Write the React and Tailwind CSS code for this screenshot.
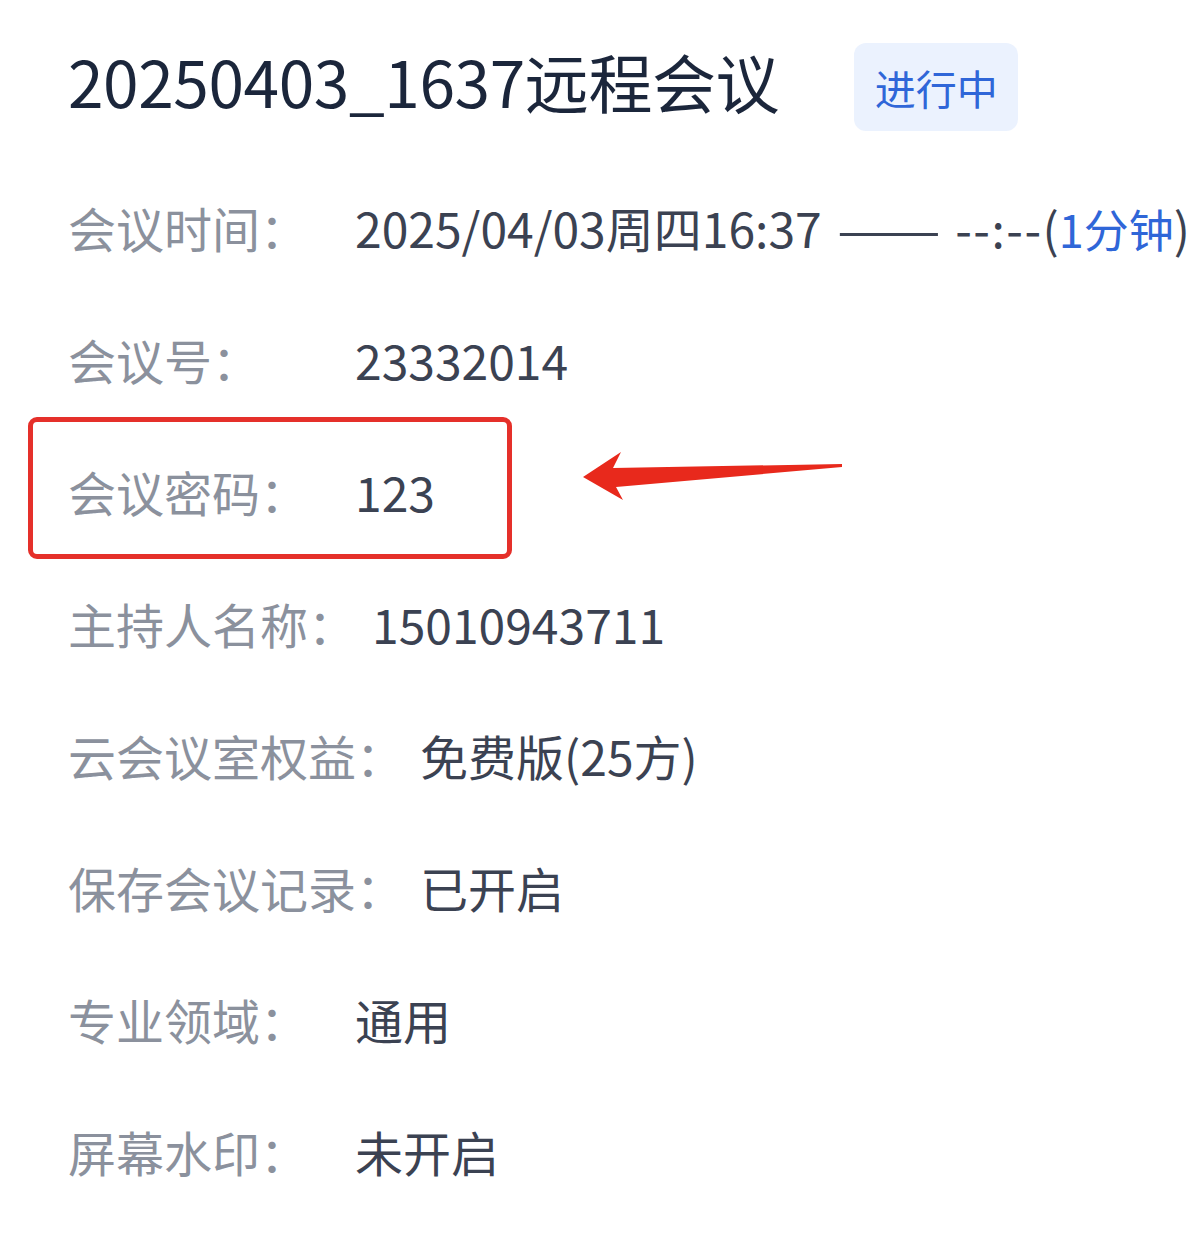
import React from "react";

const rows = [
  { label: "会议时间：", value: "time" },
  { label: "会议号：", value: "23332014" },
  { label: "会议密码：", value: "123", highlight: true },
  { label: "主持人名称：", value: "15010943711" },
  { label: "云会议室权益：", value: "免费版(25方)" },
  { label: "保存会议记录：", value: "已开启" },
  { label: "专业领域：", value: "通用" },
  { label: "屏幕水印：", value: "未开启" },
];

function Value({ v }) {
  if (v === "time") {
    return (
      <span className="whitespace-nowrap">
        2025/04/03周四16:37
        <span className="inline-block ml-[15px] mr-[38px] scale-x-[1.29] origin-left">——</span>
        <span className="tracking-[1.5px]">--:--</span>(<span className="text-[#2f66d8] text-[45px]">1分钟</span>)
      </span>
    );
  }
  return <span className="whitespace-nowrap">{v}</span>;
}

export default function App() {
  return (
    <div
      className="w-[1200px] h-[1247px] bg-white pl-[68px] pt-[43px] overflow-hidden"
      style={{ fontFamily: '"Noto Sans CJK SC", "Noto Sans", sans-serif' }}
    >
      <div className="flex items-center h-[88px]">
        <h1 className="text-[64px] leading-none font-normal text-[#1b263b] tracking-[-0.4px] whitespace-nowrap -mt-[14px]">
          20250403_1637远程会议
        </h1>
        <span className="ml-[75px] h-[88px] w-[164px] rounded-[12px] bg-[#ebf2fe] text-[#2f66d8] text-[41px] leading-none flex items-center justify-center">
          进行中
        </span>
      </div>
      <div className="mt-[30px] flex flex-col">
        {rows.map((r) => (
          <div key={r.label} className="relative h-[132px] flex items-center text-[48px] leading-none">
            <span className="min-w-[271px] text-[#8b919d] whitespace-nowrap">{r.label}</span>
            <span className="ml-[16px] text-[#3b4252]">
              <Value v={r.value} />
            </span>
            {r.highlight && (
              <>
                <div className="absolute left-[-40px] top-[-8px] w-[484px] h-[142px] border-[5px] border-[#e5302a] rounded-[9px] pointer-events-none" />
                <svg
                  className="absolute left-[502px] top-[22px] pointer-events-none"
                  width="280"
                  height="60"
                  viewBox="570 450 280 60"
                >
                  <polygon
                    points="583,480 621,455 613,471 842,467 842,470 616,490 623,503"
                    fill="#e8291c"
                  />
                </svg>
              </>
            )}
          </div>
        ))}
      </div>
    </div>
  );
}
